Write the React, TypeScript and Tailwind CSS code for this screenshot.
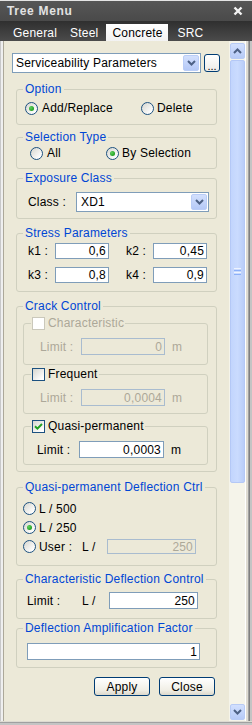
import type { ReactNode } from "react";

function Chevron({ up = false }: { up?: boolean }) {
  return (
    <svg width="9" height="6" viewBox="0 0 9 6">
      <path
        d={up ? "M1 5 L4.5 1.5 L8 5" : "M1 1 L4.5 4.5 L8 1"}
        stroke="#4d6185"
        strokeWidth="2"
        fill="none"
      />
    </svg>
  );
}

function DropButton() {
  return (
    <span className="flex h-[16px] w-[16px] shrink-0 items-center justify-center rounded-[2px] border border-[#bacdf7] bg-[linear-gradient(180deg,#d3e0fd_0%,#b5c9f7_100%)]">
      <Chevron />
    </span>
  );
}

function Radio({ checked = false }: { checked?: boolean }) {
  return (
    <span className="flex h-[13px] w-[13px] shrink-0 items-center justify-center rounded-full border border-[#1c5180] bg-[linear-gradient(135deg,#d6d6cf_0%,#ffffff_85%)]">
      {checked && (
        <span className="h-[5px] w-[5px] rounded-full bg-[radial-gradient(circle_at_35%_35%,#5fd05f_0%,#21a121_70%)]" />
      )}
    </span>
  );
}

function Check({ checked = false, disabled = false }: { checked?: boolean; disabled?: boolean }) {
  return (
    <span
      className={`flex h-[13px] w-[13px] shrink-0 items-center justify-center border ${
        disabled
          ? "border-[#cac8bb] bg-white"
          : "border-[#1c5180] bg-[linear-gradient(135deg,#d6d6cf_0%,#ffffff_85%)]"
      }`}
    >
      {checked && (
        <svg width="9" height="9" viewBox="0 0 9 9">
          <path d="M1 4.2 L3.4 6.6 L8 2" stroke="#21a121" strokeWidth="2" fill="none" />
        </svg>
      )}
    </span>
  );
}

function Field({ value, className = "", disabled = false }: { value: string; className?: string; disabled?: boolean }) {
  return (
    <div
      className={`flex shrink-0 items-center justify-end border pr-[2px] text-[12px] leading-none ${
        disabled ? "border-[#a9bccf] bg-[#ece9d8] text-[#aca899]" : "border-[#7f9db9] bg-white text-black"
      } ${className}`}
    >
      {value}
    </div>
  );
}

function Group({ title, className = "", children }: { title: string; className?: string; children: ReactNode }) {
  return (
    <fieldset className={`ml-[12px] w-[201px] rounded-[3px] border border-[#d0d0bf] ${className}`}>
      <legend className="ml-[6px] px-[2px] text-[12px] leading-[14px] text-[#0046d5]">{title}</legend>
      {children}
    </fieldset>
  );
}

function CrackBox({
  title,
  value,
  checked = false,
  disabled = false,
  locked = false,
  className = "",
}: {
  title: string;
  value: string;
  checked?: boolean;
  disabled?: boolean;
  locked?: boolean;
  className?: string;
}) {
  const tone = disabled ? "text-[#aca899]" : "text-black";
  return (
    <fieldset className={`ml-[6px] w-[185px] rounded-[3px] border border-[#d0d0bf] ${className}`}>
      <legend className="ml-[7px] px-[1px] text-[12px] leading-[14px]">
        <span className="flex items-center gap-[3px]">
          <Check checked={checked} disabled={locked} />
          <span className={locked ? "text-[#aca899]" : "text-black"}>{title}</span>
        </span>
      </legend>
      <div className={`mt-[8px] flex items-center ${checked ? "pl-[13px]" : "pl-[16px]"}`}>
        <span className={`${checked ? "w-[42px]" : "w-[41px]"} ${tone}`}>Limit :</span>
        <Field value={value} disabled={disabled} className={`h-[17px] ${checked ? "w-[85px]" : "w-[84px]"}`} />
        <span className={`ml-[7px] ${tone}`}>m</span>
      </div>
    </fieldset>
  );
}

export default function App() {
  return (
    <div className="flex h-[725px] w-[252px] flex-col overflow-hidden bg-[#ece9d8] font-['Liberation_Sans',Arial,sans-serif] text-[12px] leading-[14px] tracking-[0.2px] text-black">
      <div className="h-[1px] bg-[#e4e4e4]" />

      {/* title bar */}
      <div className="flex h-[20px] items-center justify-between bg-[linear-gradient(180deg,#565656_0%,#4a4a4a_100%)] pl-[7px] pr-[9px]">
        <span className="text-[12px] font-bold tracking-[0.7px] text-[#e2e2e2]">Tree Menu</span>
        <svg width="10" height="10" viewBox="0 0 10 10">
          <path d="M1.5 1.5 L8.5 8.5 M8.5 1.5 L1.5 8.5" stroke="#f4f4f4" strokeWidth="2.4" />
        </svg>
      </div>

      {/* tabs */}
      <div className="flex h-[20px] items-end bg-[linear-gradient(180deg,#2f2f2f_0%,#4b4b4b_100%)] text-white">
        <span className="ml-[13px] flex h-[17px] items-center">General</span>
        <span className="ml-[13px] flex h-[17px] items-center">Steel</span>
        <span className="ml-[8px] flex h-[17px] w-[62px] items-center bg-[linear-gradient(180deg,#ffffff_0%,#f2f2f2_100%)] pl-[6px] text-black">
          Concrete
        </span>
        <span className="ml-[9px] flex h-[17px] items-center">SRC</span>
      </div>

      {/* body */}
      <div className="flex min-h-0 flex-1">
        <div className="w-[1px] bg-[#c8c8c8]" />
        <div className="w-[2px] bg-[#efefef]" />
        <div className="w-[1px] bg-[#aca899]" />

        <div className="flex w-[225px] flex-col pt-[12px]">
          {/* combo */}
          <div className="ml-[8px] flex items-center">
            <div className="flex h-[20px] w-[189px] items-center justify-between border border-[#7f9db9] bg-white pl-[3px] pr-[1px]">
              <span>Serviceability Parameters</span>
              <DropButton />
            </div>
            <span className="ml-[3px] flex h-[18px] w-[16px] items-end justify-center rounded-[3px] border border-[#003c74] bg-[linear-gradient(180deg,#ffffff_0%,#ecebe6_100%)] pb-[1px] text-[11px] leading-[8px] tracking-normal">
              ...
            </span>
          </div>

          <Group title="Option" className="mt-[9px] h-[43px]">
            <div className="mt-[4px] flex h-[16px] items-center pl-[8px]">
              <Radio checked />
              <span className="ml-[4px] w-[99px]">Add/Replace</span>
              <Radio />
              <span className="ml-[3px]">Delete</span>
            </div>
          </Group>

          <Group title="Selection Type" className="mt-[5px] h-[39px]">
            <div className="mt-[1px] flex h-[16px] items-center pl-[13px]">
              <Radio />
              <span className="ml-[4px] w-[59px]">All</span>
              <Radio checked />
              <span className="ml-[3px]">By Selection</span>
            </div>
          </Group>

          <Group title="Exposure Class" className="mt-[2px] h-[48px]">
            <div className="mt-[7px] flex items-center pl-[11px]">
              <span className="w-[48px]">Class :</span>
              <div className="flex h-[20px] w-[133px] items-center justify-between border border-[#7f9db9] bg-white pl-[4px] pr-[1px]">
                <span>XD1</span>
                <DropButton />
              </div>
            </div>
          </Group>

          <Group title="Stress Parameters" className="mt-[7px] h-[66px]">
            <div className="mt-[3px] flex items-center pl-[11px]">
              <span className="w-[27px]">k1 :</span>
              <Field value="0,6" className="h-[16px] w-[54px]" />
              <span className="ml-[17px] w-[27px]">k2 :</span>
              <Field value="0,45" className="h-[16px] w-[54px]" />
            </div>
            <div className="mt-[8px] flex items-center pl-[11px]">
              <span className="w-[27px]">k3 :</span>
              <Field value="0,8" className="h-[16px] w-[54px]" />
              <span className="ml-[17px] w-[27px]">k4 :</span>
              <Field value="0,9" className="h-[16px] w-[54px]" />
            </div>
          </Group>

          <Group title="Crack Control" className="mt-[7px] h-[173px]">
            <CrackBox title="Characteristic" value="0" disabled locked className="mt-[3px] h-[49px]" />
            <CrackBox title="Frequent" value="0,0004" disabled className="mt-[2px] h-[47px]" />
            <CrackBox title="Quasi-permanent" value="0,0003" checked className="mt-[5px] h-[46px]" />
          </Group>

          <Group title="Quasi-permanent Deflection Ctrl" className="mt-[8px] h-[86px]">
            <div className="mt-[5px] flex h-[19px] items-center pl-[6px]">
              <Radio />
              <span className="ml-[3px]">L / 500</span>
            </div>
            <div className="flex h-[19px] items-center pl-[6px]">
              <Radio checked />
              <span className="ml-[3px]">L / 250</span>
            </div>
            <div className="flex h-[19px] items-center pl-[6px]">
              <Radio />
              <span className="ml-[3px] w-[43px]">User :</span>
              <span className="w-[25px]">L /</span>
              <Field value="250" disabled className="h-[15px] w-[89px]" />
            </div>
          </Group>

          <Group title="Characteristic Deflection Control" className="mt-[6px] h-[47px]">
            <div className="mt-[6px] flex items-center pl-[10px]">
              <span className="w-[55px]">Limit :</span>
              <span className="w-[27px]">L /</span>
              <Field value="250" className="h-[17px] w-[89px]" />
            </div>
          </Group>

          <Group title="Deflection Amplification Factor" className="mt-[2px] h-[47px]">
            <div className="mt-[8px] flex items-center pl-[10px]">
              <Field value="1" className="h-[17px] w-[173px]" />
            </div>
          </Group>

          <div className="ml-[90px] mt-[9px] flex gap-[9px]">
            <span className="flex h-[19px] w-[56px] items-center justify-center rounded-[3px] border border-[#003c74] bg-[linear-gradient(180deg,#ffffff_0%,#f1efe6_70%,#dcd8cc_100%)]">
              Apply
            </span>
            <span className="flex h-[19px] w-[56px] items-center justify-center rounded-[3px] border border-[#003c74] bg-[linear-gradient(180deg,#ffffff_0%,#f1efe6_70%,#dcd8cc_100%)]">
              Close
            </span>
          </div>
        </div>

        {/* scrollbar */}
        <div className="flex w-[16px] flex-col bg-[#f5f4ea] pb-[1px] pl-[1px] pt-[2px]">
          <span className="flex h-[16px] w-[15px] items-center justify-center rounded-[2px] border border-[#b8cbf5] bg-[linear-gradient(180deg,#d2e0fe_0%,#b6caf7_100%)]">
            <Chevron up />
          </span>
          <div className="mt-[1px] flex h-[423px] w-[15px] items-center justify-center rounded-[2px] border border-[#b4c8f6] bg-[linear-gradient(90deg,#c2d5fd_0%,#cadbfe_50%,#b9cdf9_100%)]">
            <div className="flex flex-col gap-[1px]">
              <span className="h-[1px] w-[7px] bg-[#eef4fe]" />
              <span className="h-[1px] w-[7px] bg-[#8cb0f8]" />
              <span className="h-[1px] w-[7px] bg-[#eef4fe]" />
              <span className="h-[1px] w-[7px] bg-[#8cb0f8]" />
            </div>
          </div>
          <div className="flex-1" />
          <span className="flex h-[16px] w-[15px] items-center justify-center rounded-[2px] border border-[#b8cbf5] bg-[linear-gradient(180deg,#d2e0fe_0%,#b6caf7_100%)]">
            <Chevron />
          </span>
        </div>

        <div className="w-[1px] bg-[#ffffff]" />
        <div className="w-[2px] bg-[#dedbd2]" />
        <div className="w-[1px] bg-[#a0a0a0]" />
        <div className="w-[1px] bg-[#808080]" />
        <div className="w-[2px] bg-[#c4c4c4]" />
      </div>

      <div className="h-[1px] bg-[#dedbd2]" />
      <div className="h-[1px] bg-[#a0a0a0]" />
      <div className="h-[2px] bg-[#c4c4c4]" />
    </div>
  );
}
